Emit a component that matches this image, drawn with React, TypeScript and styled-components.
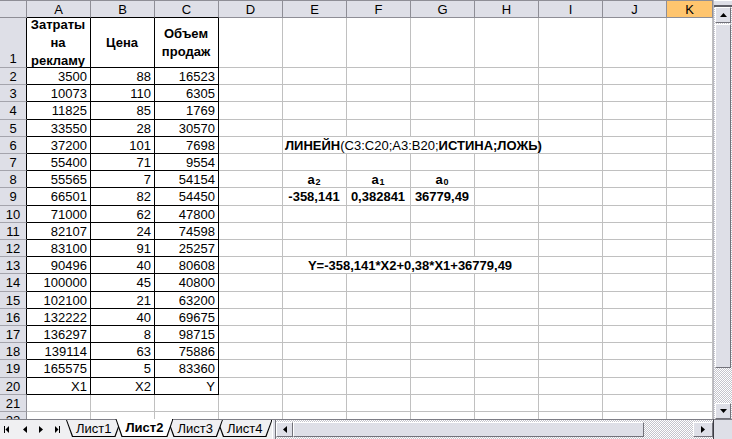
import React from "react";
import styled, { createGlobalStyle } from "styled-components";

const GlobalStyle = createGlobalStyle`
  html, body { margin: 0; padding: 0; background: #fff; }
  body { font-family: "Liberation Sans", Arial, sans-serif; font-size: 13px; color: #000; }
  * { box-sizing: border-box; }
`;

const HEADER_BG = "#DEDFE7";
const HEADER_LINE = "#8E8E96";
const GRID = "#C0C0C0";
const CHECKER = `
  background-color: #fff;
  background-image: repeating-conic-gradient(#C4C4CC 0 25%, #fff 0 50%);
  background-size: 2px 2px;
`;

const Window = styled.div`
  width: 732px;
  height: 439px;
  overflow: hidden;
  display: flex;
  flex-direction: column;
  background: #fff;
`;

const Workspace = styled.div`
  display: flex;
  height: 419px;
  flex: none;
`;

const Sheet = styled.div`
  width: 713px;
  flex: none;
  overflow: hidden;
  display: flex;
  flex-direction: column;
  border-top: 1px solid ${HEADER_LINE};
`;

const Row = styled.div<{ $h: number }>`
  display: flex;
  flex: none;
  height: ${(p) => p.$h}px;
`;

const ColHead = styled.div<{ $w: number; $selected?: boolean; $edge?: boolean }>`
  flex: none;
  width: ${(p) => p.$w}px;
  background: ${(p) => (p.$selected ? "#FFC56E" : HEADER_BG)};
  border-right: 1px solid ${HEADER_LINE};
  border-bottom: 1px solid ${(p) => (p.$edge ? "#000" : HEADER_LINE)};
  display: flex;
  align-items: center;
  justify-content: center;
  line-height: 1;
`;

const RowHead = styled.div<{ $edge?: boolean; $bottom?: boolean }>`
  flex: none;
  width: 27px;
  background: ${HEADER_BG};
  border-right: 1px solid ${(p) => (p.$edge ? "#000" : HEADER_LINE)};
  border-bottom: 1px solid #A4A4AC;
  display: flex;
  justify-content: center;
  align-items: ${(p) => (p.$bottom ? "flex-end" : "center")};
  padding-bottom: ${(p) => (p.$bottom ? "1px" : "0")};
  line-height: 15px;
`;

type Align = "left" | "center" | "right";
const justify: Record<Align, string> = { left: "flex-start", center: "center", right: "flex-end" };

const Cell = styled.div<{ $w: number; $align?: Align; $bold?: boolean; $boxed?: boolean }>`
  flex: none;
  width: ${(p) => p.$w}px;
  border-right: 1px solid ${(p) => (p.$boxed ? "#000" : GRID)};
  border-bottom: 1px solid ${(p) => (p.$boxed ? "#000" : GRID)};
  display: flex;
  align-items: center;
  justify-content: ${(p) => justify[p.$align ?? "right"]};
  padding: 0 3px 0 2px;
  white-space: nowrap;
  font-weight: ${(p) => (p.$bold ? 700 : 400)};
  line-height: 15px;
`;

const HeadLabel = styled.div`
  text-align: center;
  line-height: 18px;
  font-weight: 700;
  white-space: nowrap;
`;

const Regular = styled.span`
  font-weight: 400;
`;

const Sub = styled.sub`
  font-size: 9px;
  vertical-align: baseline;
  position: relative;
  top: 3px;
  margin-left: 1px;
`;

/* vertical scrollbar */
const VScroll = styled.div`
  width: 19px;
  flex: none;
  display: flex;
  flex-direction: column;
  padding: 0 1px 0 1px;
  border-left: 1px solid #B8B8C0;
  ${CHECKER}
`;

const SplitBar = styled.div`
  height: 7px;
  flex: none;
  margin: 0 -1px;
  background: ${HEADER_BG};
  border-top: 1px solid #fff;
  border-bottom: 2px solid #5E5E66;
`;

const ScrollBtn = styled.div<{ $h?: number; $w?: number }>`
  flex: none;
  height: ${(p) => (p.$h ? `${p.$h}px` : "auto")};
  width: ${(p) => (p.$w ? `${p.$w}px` : "auto")};
  background: ${HEADER_BG};
  border: 1px solid;
  border-color: #fff #72727A #72727A #fff;
  display: flex;
  align-items: center;
  justify-content: center;
`;

const VThumb = styled.div`
  flex: none;
  height: 344px;
  margin-top: 1px;
  background: ${HEADER_BG};
  border: 1px solid;
  border-color: #fff #72727A #72727A #fff;
`;

const Track = styled.div`
  flex: 1;
`;

/* bottom strip */
const Strip = styled.div`
  height: 20px;
  flex: none;
  display: flex;
  background: #F0F0F2;
  box-shadow: inset 0 1px 0 #7E7E86;
`;

const Nav = styled.div`
  width: 66px;
  flex: none;
  display: flex;
  align-items: center;
  padding-left: 4px;
`;

const NavBtn = styled.span<{ $gap: number }>`
  display: flex;
  margin-left: ${(p) => p.$gap}px;
`;

const Tabs = styled.div`
  display: flex;
  flex: none;
  padding-left: 6px;
  align-items: flex-start;
`;

const Tab = styled.div<{ $active?: boolean; $z: number }>`
  position: relative;
  z-index: ${(p) => p.$z};
  margin-left: -6px;
  margin-top: ${(p) => (p.$active ? 0 : 1)}px;
  height: ${(p) => (p.$active ? 18 : 17)}px;
  background: #000;
  clip-path: polygon(0 0, 100% 0, calc(100% - 6px) 100%, 6px 100%);
  display: flex;
  padding: 0 1px 1px 1px;
`;

const TabFace = styled.div<{ $active?: boolean }>`
  flex: 1;
  background: ${(p) => (p.$active ? "#fff" : "#F0F0F2")};
  clip-path: polygon(0 0, 100% 0, calc(100% - 6px) 100%, 6px 100%);
  display: flex;
  align-items: center;
  justify-content: center;
  padding: 0 9px;
  font-weight: ${(p) => (p.$active ? 700 : 400)};
  white-space: nowrap;
`;

const HScroll = styled.div`
  margin-left: auto;
  width: 441px;
  flex: none;
  display: flex;
  padding: 2px 0 2px 0;
  ${CHECKER}
  border-top: 1px solid #7E7E86;
`;

const HSplit = styled.div`
  width: 4px;
  flex: none;
  background: ${HEADER_BG};
  border-left: 1px solid #fff;
  border-right: 1px solid #72727A;
  margin: -2px 0;
`;

const HThumb = styled.div`
  flex: 1;
  background: ${HEADER_BG};
  border: 1px solid;
  border-color: #fff #72727A #72727A #fff;
`;

const HTrack = styled.div`
  width: 49px;
  flex: none;
`;

const Corner = styled.div`
  width: 19px;
  flex: none;
  background: ${HEADER_BG};
  border-left: 1px solid #3C3C44;
  border-top: 1px solid #7E7E86;
`;

const COLS = ["A", "B", "C", "D", "E", "F", "G", "H", "I", "J", "K"];
const colW = (i: number) => (i === 10 ? 46 : 64);

const DATA: [string, string, string][] = [
  ["3500", "88", "16523"],
  ["10073", "110", "6305"],
  ["11825", "85", "1769"],
  ["33550", "28", "30570"],
  ["37200", "101", "7698"],
  ["55400", "71", "9554"],
  ["55565", "7", "54154"],
  ["66501", "82", "54450"],
  ["71000", "62", "47800"],
  ["82107", "24", "74598"],
  ["83100", "91", "25257"],
  ["90496", "40", "80608"],
  ["100000", "45", "40800"],
  ["102100", "21", "63200"],
  ["132222", "40", "69675"],
  ["136297", "8", "98715"],
  ["139114", "63", "75886"],
  ["165575", "5", "83360"],
  ["X1", "X2", "Y"],
];

const ROW_H = Array.from({ length: 21 }, (_, i) => Math.round((i + 1) * 17.2) - Math.round(i * 17.2));

type Extra = { w: number; content?: React.ReactNode; align?: Align; bold?: boolean };

function extras(n: number): Extra[] {
  const plain = (i: number): Extra => ({ w: colW(i) });
  const tail = [plain(8), plain(9), plain(10)];
  if (n === 6) {
    return [
      plain(3),
      {
        w: 256,
        align: "left",
        bold: true,
        content: (
          <>
            ЛИНЕЙН<Regular>(C3:C20;A3:B20;</Regular>ИСТИНА;ЛОЖЬ)
          </>
        ),
      },
      ...tail,
    ];
  }
  if (n === 13) {
    return [plain(3), { w: 256, align: "center", bold: true, content: "Y=-358,141*X2+0,38*X1+36779,49" }, ...tail];
  }
  if (n === 8) {
    return [
      plain(3),
      { w: 64, align: "center", bold: true, content: <>a<Sub>2</Sub></> },
      { w: 64, align: "center", bold: true, content: <>a<Sub>1</Sub></> },
      { w: 64, align: "center", bold: true, content: <>a<Sub>0</Sub></> },
      plain(7),
      ...tail,
    ];
  }
  if (n === 9) {
    return [
      plain(3),
      { w: 64, align: "center", bold: true, content: "-358,141" },
      { w: 64, align: "center", bold: true, content: "0,382841" },
      { w: 64, align: "center", bold: true, content: "36779,49" },
      plain(7),
      ...tail,
    ];
  }
  return [3, 4, 5, 6, 7, 8, 9, 10].map(plain);
}

function SheetRow({ n, h }: { n: number; h: number }) {
  const boxed = n <= 20;
  const vals = n >= 2 && n <= 20 ? DATA[n - 2] : null;
  return (
    <Row $h={h}>
      <RowHead $edge={boxed} $bottom={n === 1}>
        {n}
      </RowHead>
      {n === 1 ? (
        <>
          <Cell $w={64} $boxed $align="center">
            <HeadLabel>
              Затраты
              <br />
              на
              <br />
              рекламу
            </HeadLabel>
          </Cell>
          <Cell $w={64} $boxed $align="center">
            <HeadLabel>Цена</HeadLabel>
          </Cell>
          <Cell $w={64} $boxed $align="center">
            <HeadLabel>
              Объем
              <br />
              продаж
            </HeadLabel>
          </Cell>
        </>
      ) : (
        [0, 1, 2].map((i) => (
          <Cell key={i} $w={64} $boxed={boxed}>
            {vals ? vals[i] : null}
          </Cell>
        ))
      )}
      {extras(n).map((e, i) => (
        <Cell key={`x${i}`} $w={e.w} $align={e.align} $bold={e.bold}>
          {e.content}
        </Cell>
      ))}
    </Row>
  );
}

const ArrowUp = () => (
  <svg width="7" height="4" viewBox="0 0 7 4">
    <polygon points="3.5,0 7,4 0,4" fill="#000" />
  </svg>
);
const ArrowDown = () => (
  <svg width="7" height="4" viewBox="0 0 7 4">
    <polygon points="0,0 7,0 3.5,4" fill="#000" />
  </svg>
);
const ArrowLeft = () => (
  <svg width="4" height="7" viewBox="0 0 4 7">
    <polygon points="4,0 4,7 0,3.5" fill="#000" />
  </svg>
);
const ArrowRight = () => (
  <svg width="4" height="7" viewBox="0 0 4 7">
    <polygon points="0,0 0,7 4,3.5" fill="#000" />
  </svg>
);
const FirstIcon = () => (
  <svg width="5" height="7" viewBox="0 0 5 7">
    <rect x="0" y="0" width="1" height="7" fill="#000" />
    <polygon points="5,0 5,7 1.5,3.5" fill="#000" />
  </svg>
);
const LastIcon = () => (
  <svg width="5" height="7" viewBox="0 0 5 7">
    <polygon points="0,0 0,7 3.5,3.5" fill="#000" />
    <rect x="4" y="0" width="1" height="7" fill="#000" />
  </svg>
);

const SHEETS = ["Лист1", "Лист2", "Лист3", "Лист4"];
const ACTIVE = 1;

export default function App() {
  return (
    <>
      <GlobalStyle />
      <Window>
        <Workspace>
          <Sheet>
            <Row $h={17}>
              <ColHead $w={27} />
              {COLS.map((c, i) => (
                <ColHead key={c} $w={colW(i)} $selected={c === "K"} $edge={i < 3}>
                  {c}
                </ColHead>
              ))}
            </Row>
            <SheetRow n={1} h={50} />
            {ROW_H.map((h, i) => (
              <SheetRow key={i} n={i + 2} h={h} />
            ))}
          </Sheet>
          <VScroll>
            <SplitBar />
            <ScrollBtn $h={16}>
              <ArrowUp />
            </ScrollBtn>
            <VThumb />
            <Track />
            <ScrollBtn $h={16}>
              <ArrowDown />
            </ScrollBtn>
          </VScroll>
        </Workspace>
        <Strip>
          <Nav>
            <NavBtn $gap={0}>
              <FirstIcon />
            </NavBtn>
            <NavBtn $gap={14}>
              <ArrowLeft />
            </NavBtn>
            <NavBtn $gap={12}>
              <ArrowRight />
            </NavBtn>
            <NavBtn $gap={12}>
              <LastIcon />
            </NavBtn>
          </Nav>
          <Tabs>
            {SHEETS.map((s, i) => (
              <Tab key={s} $active={i === ACTIVE} $z={i === ACTIVE ? 10 : i < ACTIVE ? 5 + i : 9 - i}>
                <TabFace $active={i === ACTIVE}>{s}</TabFace>
              </Tab>
            ))}
          </Tabs>
          <HScroll>
            <HSplit />
            <ScrollBtn $w={17}>
              <ArrowLeft />
            </ScrollBtn>
            <HThumb />
            <HTrack />
            <ScrollBtn $w={20}>
              <ArrowRight />
            </ScrollBtn>
          </HScroll>
          <Corner />
        </Strip>
      </Window>
    </>
  );
}
